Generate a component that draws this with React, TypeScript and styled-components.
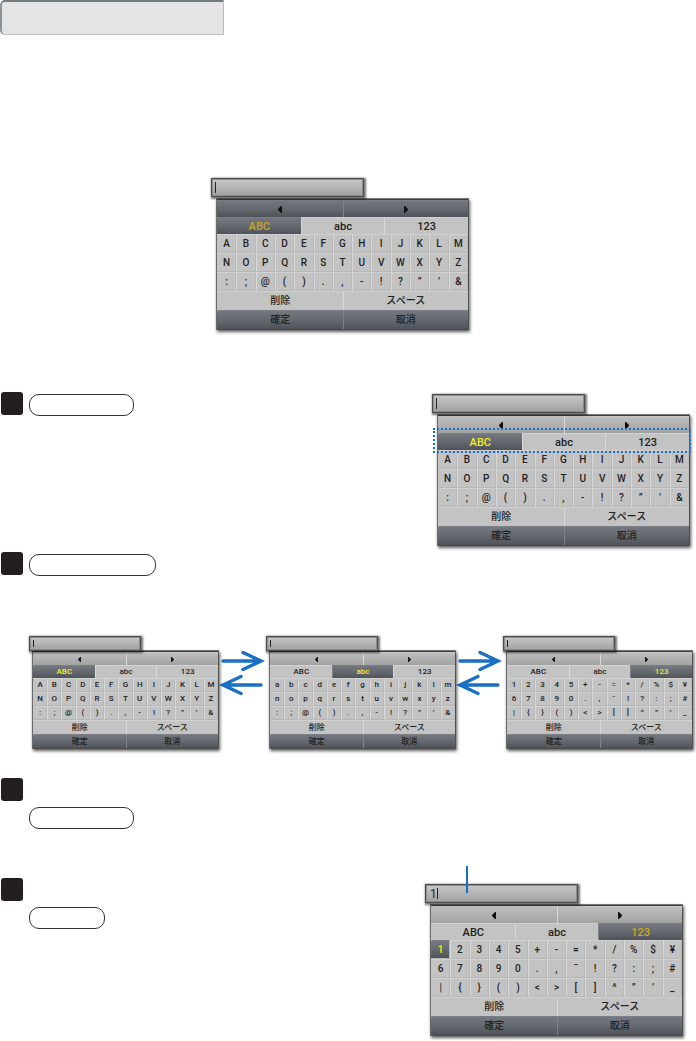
import React from 'react';
import styled, { createGlobalStyle, css } from 'styled-components';

const Global = createGlobalStyle`
  * { box-sizing: border-box; }
  body { margin: 0; background: #fff; font-family: Roboto, "Noto Sans CJK JP", sans-serif; }
  button, input { font: inherit; margin: 0; padding: 0; border: 0; border-radius: 0; }
`;

const BLUE = '#1a70c4';
const darkFill = 'linear-gradient(#74777f, #666a71 45%, #4f5359)';
const barFill = 'linear-gradient(#bebebe, #a2a2a2)';

const Page = styled.main`
  padding-bottom: 5px;
`;

const Banner = styled.header`
  width: 32%;
  min-width: 224px;
  height: 35px;
  background: #e4e4e4;
  border: 1px solid #bdbdbd;
  border-top: 2px solid #737a80;
  border-left: 2px solid #8b9299;
  border-radius: 5px 0 0 5px;
`;

const Intro = styled.section`
  display: flex;
  justify-content: center;
  padding: 143px 17px 63px 0;
`;

const Split = styled.section<{ $edge: number }>`
  display: flex;
  justify-content: space-between;
  align-items: flex-start;
  padding-right: ${(p) => p.$edge}px;
`;

const Step = styled.div<{ $stacked?: boolean }>`
  display: flex;
  flex-direction: ${(p) => (p.$stacked ? 'column' : 'row')};
  gap: 6px;
  padding-left: 1px;
`;

const Steps = styled.div`
  display: flex;
  flex-direction: column;
  gap: 49px;
`;

const Badge = styled.span`
  flex: none;
  width: 22px;
  height: 23px;
  border-radius: 3px;
  background: #231f20;
`;

const Pill = styled.span<{ $width: number; $stacked?: boolean }>`
  width: ${(p) => p.$width}px;
  height: 22px;
  margin: ${(p) => (p.$stacked ? '0 0 0 28px' : '2px 0 0')};
  border: 1px solid #333;
  border-radius: 10px;
`;

const Flow = styled.section`
  display: flex;
  padding: 60px 4px 29px 29px;
`;

const Swap = styled.div`
  flex: 1;
  display: flex;
  justify-content: center;
`;

const Aside = styled.div<{ $top?: number; $bottom?: number }>`
  padding-top: ${(p) => p.$top || 0}px;
  padding-bottom: ${(p) => p.$bottom || 0}px;
`;

const Pad = styled.form<{ $small?: boolean }>`
  position: relative;
  flex: none;
  width: ${(p) => (p.$small ? 189 : 257)}px;
`;

const Field = styled.div<{ $small?: boolean }>`
  position: relative;
  z-index: 1;
  width: ${(p) => (p.$small ? 112 : 153)}px;
  height: ${(p) => (p.$small ? 15 : 19)}px;
  border: 1px solid #4e4e4e;
  background: linear-gradient(#c8c8c8, #a0a0a0);
  box-shadow: inset 0 0 0 1px #8b8b8b, 1px 1px 2px 1px rgba(0, 0, 0, 0.55);

  input {
    display: block;
    width: 100%;
    height: 100%;
    padding-left: 4px;
    background: none;
    outline: none;
    color: #222;
    font-size: 12px;
  }
`;

const Caret = styled.i<{ $chars: number }>`
  position: absolute;
  top: 3px;
  bottom: 3px;
  left: ${(p) => 3 + p.$chars * 8}px;
  width: 1px;
  background: #222;
`;

const Board = styled.div<{ $small?: boolean }>`
  display: grid;
  grid-template-rows: ${(p) => (p.$small ? '13px 13px 14px 14px 14px 14px 14px' : '17px 17px repeat(5, 19px)')};
  margin: ${(p) => (p.$small ? '0 0 1px 4px' : '2px 0 0 6px')};
  border-top: 1px solid #3e3e3e;
  background: #c3c3c3;
  box-shadow: 0 0 0 1px rgba(60, 60, 60, 0.65), 1px 2px 3px 1px rgba(0, 0, 0, 0.65);
`;

const Row = styled.div<{ $cols: number }>`
  display: grid;
  grid-template-columns: repeat(${(p) => p.$cols}, minmax(0, 1fr));
`;

const Cell = styled.button<{ $tone?: 'bar' | 'dark' | 'on'; $size: number; $ink?: string }>`
  display: flex;
  align-items: center;
  justify-content: center;
  min-width: 0;
  overflow: hidden;
  background: #c3c3c3;
  border-left: 1px solid #d9d9d9;
  border-top: 1px solid #d2d2d2;
  color: ${(p) => p.$ink || '#222'};
  font-size: ${(p) => p.$size}px;
  font-weight: 500;
  line-height: 1;
  &:first-child { border-left-color: transparent; }
  ${(p) => p.$tone === 'bar' && css`background: ${barFill}; border-top-color: #c6c6c6;`}
  ${(p) => (p.$tone === 'dark' || p.$tone === 'on') && css`
    background: ${darkFill};
    border-top-color: #7b7e85;
    border-left-color: #7f8288;
  `}
`;

const Key = styled(Cell)`
  border-right: 1px solid #b9b9b9;
  border-bottom: 1px solid #b6b6b6;
`;

const Focus = styled.div`
  position: absolute;
  z-index: 2;
  top: 34px;
  left: 1px;
  right: -2px;
  height: 25px;
  border: 2px dotted ${BLUE};
  pointer-events: none;
`;

const Leader = styled.i`
  position: absolute;
  z-index: 2;
  top: -18px;
  left: 41px;
  width: 2px;
  height: 27px;
  background: ${BLUE};
`;

const upper = ['ABCDEFGHIJKLM', 'NOPQRSTUVWXYZ', ':;@().,-!?”’&'];
const lower = ['abcdefghijklm', 'nopqrstuvwxyz', ':;@().,-!?”’&'];
const digits = ['12345+-=*/%$¥', '67890.,¯!?:;#', '|{}()<>[]^”’_'];
const tabs = ['ABC', 'abc', '123'];
const sets = [upper, lower, digits];

function Triangle({ back, small }: { back?: boolean; small?: boolean }) {
  return (
    <svg width={small ? 3 : 4} height={small ? 5 : 7} viewBox="0 0 4 7" aria-hidden="true">
      <path d={back ? 'M4 0v7H3L0 4V3L3 0z' : 'M0 0v7h1L4 4V3L1 0z'} fill="#111" />
    </svg>
  );
}

interface KeyboardProps {
  mode: number;
  small?: boolean;
  value?: string;
  darkBar?: boolean;
  muted?: boolean;
  picked?: string;
  children?: React.ReactNode;
}

function Keyboard({ mode, small, value = '', darkBar, muted, picked, children }: KeyboardProps) {
  const tabSize = small ? 8 : 11;
  const keySize = small ? 8 : 10;
  const wordSize = small ? 8 : 10;
  const bar = darkBar ? 'dark' : 'bar';
  return (
    <Pad $small={small} onSubmit={(e) => e.preventDefault()}>
      <Field $small={small}>
        <input type="text" aria-label="入力" defaultValue={value} />
        <Caret $chars={value.length} />
      </Field>
      <Board $small={small}>
        <Row $cols={2}>
          <Cell type="button" $tone={bar} $size={keySize} aria-label="左へ"><Triangle back small={small} /></Cell>
          <Cell type="button" $tone={bar} $size={keySize} aria-label="右へ"><Triangle small={small} /></Cell>
        </Row>
        <Row $cols={3}>
          {tabs.map((t, i) => (
            <Cell
              key={t}
              type="button"
              $size={tabSize}
              $tone={i === mode ? 'on' : undefined}
              $ink={i === mode ? (muted ? '#d0a712' : '#f4ee1c') : undefined}
            >
              {t}
            </Cell>
          ))}
        </Row>
        {sets[mode].map((line) => (
          <Row key={line} $cols={13}>
            {[...line].map((c) => (
              <Key
                key={c}
                type="button"
                $size={keySize}
                $tone={c === picked ? 'on' : undefined}
                $ink={c === picked ? '#f4ee1c' : undefined}
              >
                {c}
              </Key>
            ))}
          </Row>
        ))}
        <Row $cols={2}>
          <Cell type="button" $size={wordSize}>削除</Cell>
          <Cell type="button" $size={wordSize}>スペース</Cell>
        </Row>
        <Row $cols={2}>
          <Cell type="submit" $tone="dark" $size={wordSize}>確定</Cell>
          <Cell type="reset" $tone="dark" $size={wordSize}>取消</Cell>
        </Row>
      </Board>
      {children}
    </Pad>
  );
}

function SwapArrows() {
  return (
    <Swap>
      <svg width="48" height="64" viewBox="0 0 48 64" fill="none" stroke={BLUE} strokeWidth="3.4" strokeLinecap="round" aria-hidden="true">
        <path d="M5 25H42M25 16.500L43 25L25 33.500" />
        <path d="M43 49H6M23 40.500L5 49L23 57.500" />
      </svg>
    </Swap>
  );
}

export default function App() {
  return (
    <>
      <Global />
      <Page>
        <Banner />
        <Intro>
          <Keyboard mode={0} darkBar muted />
        </Intro>
        <Split $edge={7}>
          <Step>
            <Badge />
            <Pill $width={105} />
          </Step>
          <Aside $top={2} $bottom={7}>
            <Keyboard mode={0}>
              <Focus />
            </Keyboard>
          </Aside>
        </Split>
        <Step>
          <Badge />
          <Pill $width={127} />
        </Step>
        <Flow>
          <Keyboard mode={0} small />
          <SwapArrows />
          <Keyboard mode={1} small />
          <SwapArrows />
          <Keyboard mode={2} small />
        </Flow>
        <Split $edge={14}>
          <Steps>
            <Step $stacked>
              <Badge />
              <Pill $width={105} $stacked />
            </Step>
            <Step $stacked>
              <Badge />
              <Pill $width={76} $stacked />
            </Step>
          </Steps>
          <Aside $top={106}>
            <Keyboard mode={2} value="1" muted picked="1">
              <Leader />
            </Keyboard>
          </Aside>
        </Split>
      </Page>
    </>
  );
}
